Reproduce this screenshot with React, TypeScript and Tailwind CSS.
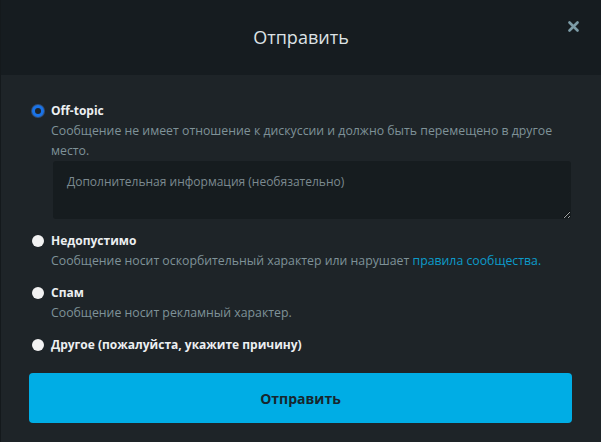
import { useState } from 'react'

const options = [
  {
    id: 'off-topic',
    label: 'Off-topic',
    desc: 'Сообщение не имеет отношение к дискуссии и должно быть перемещено в другое место.',
  },
  {
    id: 'inappropriate',
    label: 'Недопустимо',
    desc: 'Сообщение носит оскорбительный характер или нарушает ',
    link: 'правила сообщества.',
  },
  {
    id: 'spam',
    label: 'Спам',
    desc: 'Сообщение носит рекламный характер.',
  },
  {
    id: 'other',
    label: 'Другое (пожалуйста, укажите причину)',
  },
]

function Radio({ checked }: { checked: boolean }) {
  return checked ? (
    <span className="mt-[4px] h-[12px] w-[12px] shrink-0 rounded-full border-[3px] border-[#1a73e8] bg-[#1e2428] ring-1 ring-[#4b8ff0]/40" />
  ) : (
    <span className="mt-[4px] h-[12px] w-[12px] shrink-0 rounded-full bg-[#f2f2f2]" />
  )
}

export default function App() {
  const [selected, setSelected] = useState('off-topic')

  return (
    <div
      className="h-[442px] w-[601px] overflow-hidden border-l border-[#14191c] bg-[#1e2428] text-[12px]"
      style={{ fontFamily: '"Open Sans", "Noto Sans", sans-serif' }}
    >
      <div className="relative flex h-[75px] items-center justify-center bg-[#161c20]">
        <h3 className="text-[18px] text-[#dde2e5]">Отправить</h3>
        <button className="absolute right-[22px] top-[21px] text-[#7c9ba6]">
          <svg width="11" height="11" viewBox="0 0 11 11">
            <path d="M1.5 1.5 L9.5 9.5 M9.5 1.5 L1.5 9.5" stroke="currentColor" strokeWidth="2.6" strokeLinecap="round" />
          </svg>
        </button>
      </div>

      <div className="px-[28px] pt-[26px] pb-[20px]">
        <div className="flex flex-col gap-[12px] pl-[3px]">
          {options.map((o) => (
            <div key={o.id}>
              <label className="flex cursor-pointer gap-[7px]" onClick={() => setSelected(o.id)}>
                <Radio checked={selected === o.id} />
                <div className="min-w-0 flex-1">
                  <div className="font-bold leading-[20px] text-[#eceff1]">{o.label}</div>
                  {o.desc && (
                    <p className="pr-[6px] text-[12.3px] leading-[20px] text-[#7f9298]">
                      {o.desc}
                      {o.link && <a className="text-[#0c9bca]">{o.link}</a>}
                    </p>
                  )}
                </div>
              </label>
              {o.id === 'off-topic' && selected === 'off-topic' && (
                <textarea
                  placeholder="Дополнительная информация (необязательно)"
                  className="ml-[21px] mt-0 block h-[58px] w-[518px] rounded-[3px] bg-[#161c1f] px-[14px] py-[12px] text-[12px] text-[#cfd6d9] outline-none placeholder:text-[#7c8a90]"
                />
              )}
            </div>
          ))}
        </div>

        <button className="mt-[18px] h-[50px] w-[543px] rounded-[4px] bg-[#00ade5] text-[14px] font-bold text-[#17262e]">
          Отправить
        </button>
      </div>
    </div>
  )
}
